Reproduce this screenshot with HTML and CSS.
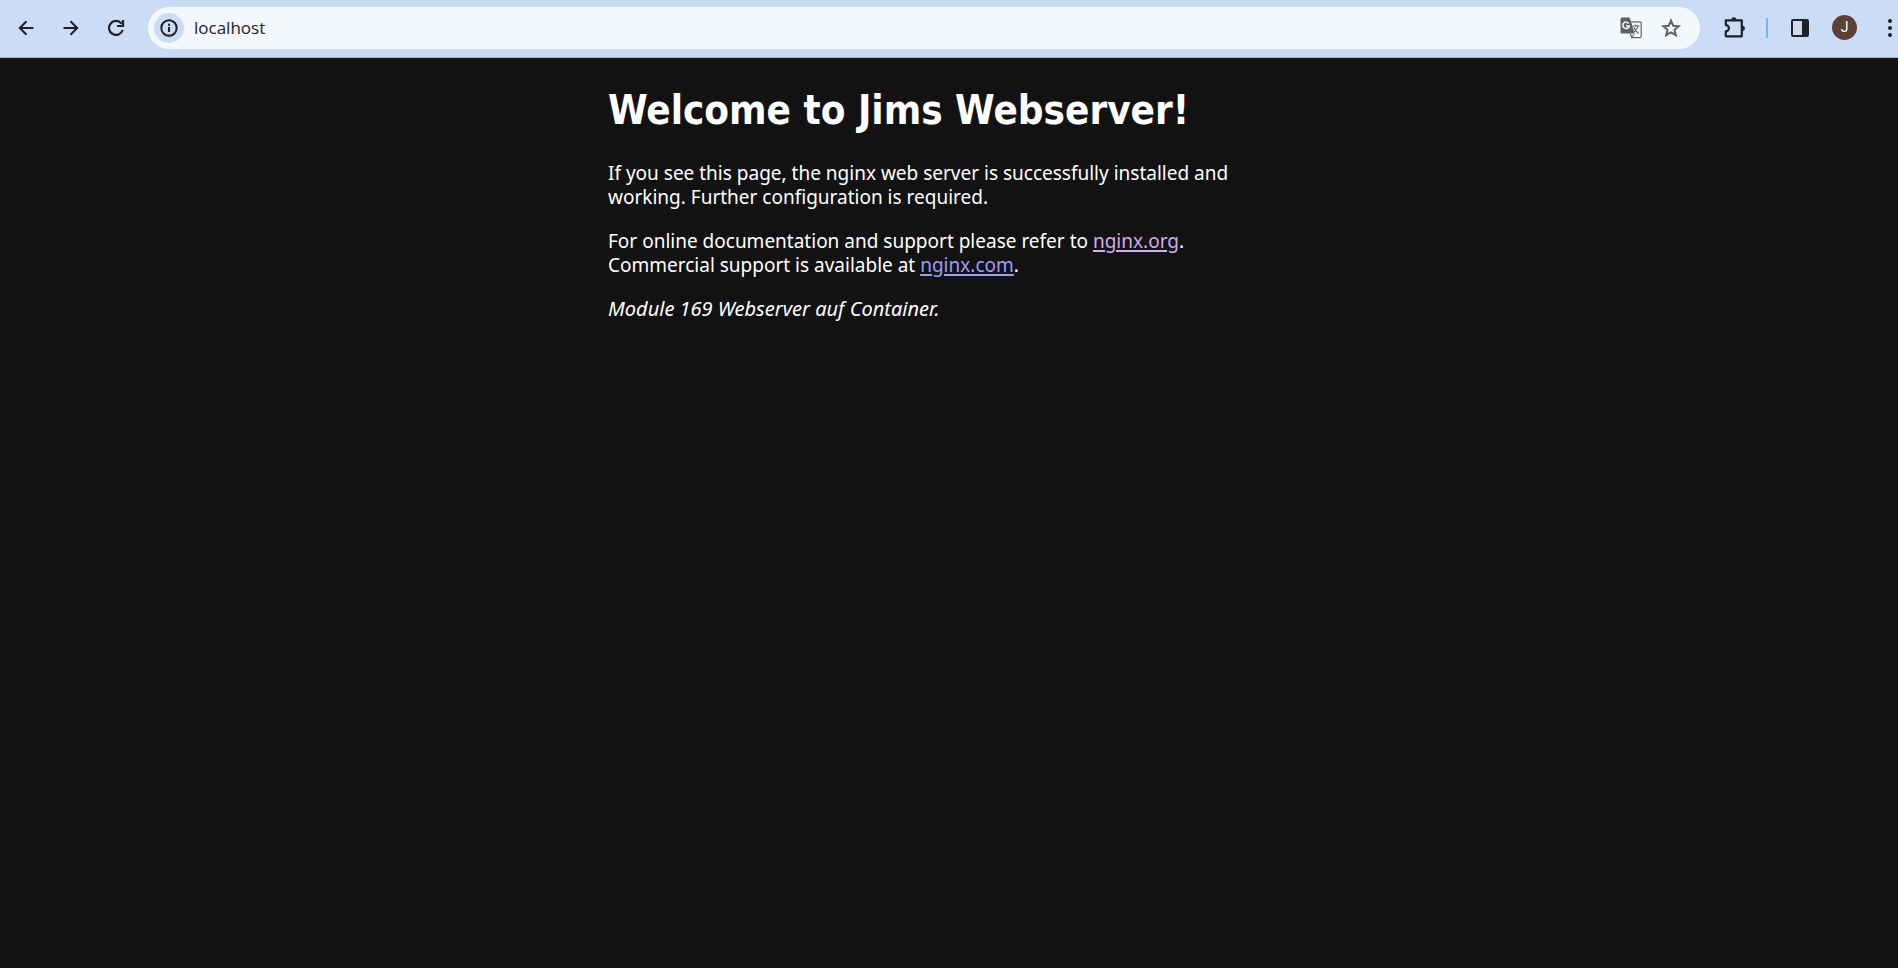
FILE: index.html
```html
<!DOCTYPE html>
<html lang="en">
<head>
<meta charset="utf-8">
<title>Welcome to Jims Webserver!</title>
<link rel="stylesheet" href="styles.css">
</head>
<body>
<header class="toolbar">
  <button class="tool" type="button" aria-label="Back">
    <svg width="20" height="20" viewBox="0 0 20 20" fill="none" stroke="currentColor" stroke-width="2"><path d="M17.500 10H4M10.500 3.300 3.800 10l6.700 6.700"/></svg>
  </button>
  <button class="tool" type="button" aria-label="Forward">
    <svg width="20" height="20" viewBox="0 0 20 20" fill="none" stroke="currentColor" stroke-width="2"><path d="M2.500 10H16M9.500 3.300l6.700 6.700-6.700 6.700"/></svg>
  </button>
  <button class="tool" type="button" aria-label="Reload">
    <svg width="20" height="20" viewBox="0 0 20 20" fill="none" stroke="currentColor" stroke-width="2.200"><path d="M15.500 5.600A7 7 0 1 0 16.700 12M17 2v6h-6"/></svg>
  </button>
  <form class="omnibox">
    <button class="site-info" type="button" aria-label="Site information">
      <svg width="20" height="20" viewBox="0 0 20 20" fill="none" stroke="currentColor" stroke-width="2"><circle cx="10" cy="10" r="7.700"/><path d="M10 9v5M10 5.700v2"/></svg>
    </button>
    <input class="address" type="text" value="localhost" aria-label="Address">
    <button class="page-action" type="button" aria-label="Translate this page">
      <svg width="22" height="22" viewBox="0 0 22 22"><path d="M2 .5h7.500L11.300 5 14.500 16.500H2A1.500 1.500 0 0 1 .5 15V2A1.500 1.500 0 0 1 2 .5z" fill="currentColor"/><path d="M11.500 4.800H20A1.200 1.200 0 0 1 21.200 6v13.500a1.200 1.200 0 0 1-1.200 1.200h-8.200l-1.400-4" fill="none" stroke="currentColor" stroke-width="1.200"/><path d="M11.800 20.700l2.700-4.200" stroke="currentColor"/><path d="M8.700 6.500A3.200 3.200 0 1 0 9.200 9H6" fill="none" stroke="#f4f7fc" stroke-width="1.500"/><path d="M12.500 9h7M15.700 7.500V9M18 9c-.5 2.500-2 4.500-4 6M13.800 10.500c1 2.500 2.700 4.500 4.700 6" fill="none" stroke="currentColor" stroke-width="1.200"/></svg>
    </button>
    <button class="page-action" type="button" aria-label="Bookmark this page">
      <svg width="22" height="22" viewBox="0 0 22 22" fill="none" stroke="currentColor" stroke-width="2"><path d="m11 3.600 2.200 5.100 5.500.5-4.200 3.600 1.300 5.400-4.800-2.900-4.800 2.900 1.300-5.400-4.200-3.600 5.500-.5z"/></svg>
    </button>
  </form>
  <button class="tool" type="button" aria-label="Extensions">
    <svg width="24" height="24" viewBox="0 0 24 24" fill="none" stroke="currentColor" stroke-width="2.200" stroke-linejoin="round"><path d="M2.800 4.300h16v16h-16v-4.900a3.100 3.100 0 0 0 0-6.200z"/><path d="M8.200 3.800a2.600 2.600 0 0 1 5.200 0zM19.300 9.700a2.600 2.600 0 0 1 0 5.200z" fill="currentColor" stroke="none"/></svg>
  </button>
  <span class="divider"></span>
  <button class="tool" type="button" aria-label="Side panel">
    <svg width="20" height="20" viewBox="0 0 20 20"><rect x="2" y="2" width="16" height="16" rx="1" fill="none" stroke="currentColor" stroke-width="2"/><path d="M12 2h6v16h-6z" fill="currentColor"/></svg>
  </button>
  <button class="tool" type="button" aria-label="Profile"><span class="avatar">J</span></button>
  <button class="menu" type="button" aria-label="Menu">
    <svg width="6" height="20" viewBox="0 0 6 20" fill="currentColor"><circle cx="3" cy="3" r="2"/><circle cx="3" cy="10" r="2"/><circle cx="3" cy="17" r="2"/></svg>
  </button>
</header>
<main class="content">
  <div class="page">
    <h1>Welcome to Jims Webserver!</h1>
    <p>If you see this page, the nginx web server is successfully installed and working. Further configuration is required.</p>
    <p>For online documentation and support please refer to <a class="visited" href="#org">nginx.org</a>.<br>
    Commercial support is available at <a href="#com">nginx.com</a>.</p>
    <p><em>Module 169 Webserver auf Container.</em></p>
  </div>
</main>
</body>
</html>
```
FILE: styles.css
```css
* {
  box-sizing: border-box;
}

body {
  margin: 0;
  min-height: 100vh;
  background: #121212;
  color: #fff;
  font-family: "Noto Sans", sans-serif;
  font-size: 19px;
  line-height: 24px;
}

.toolbar {
  display: flex;
  align-items: center;
  height: 58px;
  padding: 0 0 2px 3px;
  background: #cbdcf6;
  border-bottom: 1px solid #a9b4c8;
  color: #1f2125;
}

button {
  display: flex;
  align-items: center;
  justify-content: center;
  padding: 0;
  border: 0;
  background: none;
  color: inherit;
  font: inherit;
}

.tool {
  flex: none;
  width: 45px;
  height: 40px;
}

.omnibox {
  display: flex;
  flex: 1;
  align-items: center;
  height: 42px;
  margin: 0 12px 0 10px;
  padding: 0 9px 0 6px;
  border-radius: 21px;
  background: #f4f7fc;
}

.site-info {
  width: 30px;
  height: 30px;
  border-radius: 50%;
  background: #cbdcf6;
}

.address {
  flex: 1;
  min-width: 0;
  margin: 0;
  padding: 0 0 0 10px;
  border: 0;
  outline: 0;
  background: none;
  color: #1f2125;
  font-family: "Open Sans", sans-serif;
  font-size: 17px;
}

.page-action {
  width: 40px;
  height: 36px;
  color: #5f6368;
}

.divider {
  width: 2px;
  height: 20px;
  margin: 0 9px;
  background: #84adee;
}

.avatar {
  width: 25px;
  height: 25px;
  border-radius: 50%;
  background: #5d4037;
  color: #fff;
  font-family: Roboto, sans-serif;
  font-size: 14px;
  line-height: 25px;
}

.menu {
  flex: none;
  width: 31px;
  height: 40px;
  padding-left: 15px;
}

.content {
  padding: 28px 0 0 18px;
}

.page {
  width: 700px;
  max-width: 100%;
  margin: 0 auto;
}

h1 {
  margin: 0 0 27px;
  font-family: "DejaVu Sans Condensed", "DejaVu Sans", sans-serif;
  font-size: 40px;
  line-height: 48px;
}

p {
  max-width: 640px;
  margin: 0 0 20px;
}

em {
  font-size: 20px;
}

a {
  color: #9e9eff;
  text-underline-offset: 2px;
  text-decoration-thickness: 2px;
}

.visited {
  color: #d0adf0;
}
```
